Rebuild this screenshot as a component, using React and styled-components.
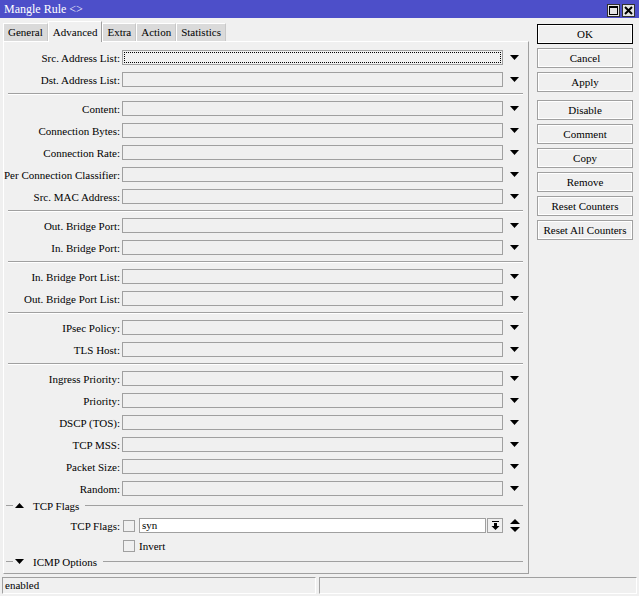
import styled, { createGlobalStyle } from "styled-components";

const GlobalStyle = createGlobalStyle`
  html, body {
    margin: 0;
    padding: 0;
    background: #f0f0f0;
  }
`;

const tabs = ["General", "Advanced", "Extra", "Action", "Statistics"];

const groups = [
  ["Src. Address List:", "Dst. Address List:"],
  [
    "Content:",
    "Connection Bytes:",
    "Connection Rate:",
    "Per Connection Classifier:",
    "Src. MAC Address:",
  ],
  ["Out. Bridge Port:", "In. Bridge Port:"],
  ["In. Bridge Port List:", "Out. Bridge Port List:"],
  ["IPsec Policy:", "TLS Host:"],
  [
    "Ingress Priority:",
    "Priority:",
    "DSCP (TOS):",
    "TCP MSS:",
    "Packet Size:",
    "Random:",
  ],
];

const buttons = [
  ["OK", "Cancel", "Apply"],
  ["Disable", "Comment", "Copy", "Remove", "Reset Counters", "Reset All Counters"],
];

function DownArrow() {
  return (
    <svg width="9" height="5" viewBox="0 0 9 5">
      <polygon points="0,0 9,0 4.5,5" fill="#000" />
    </svg>
  );
}

function Triangle({ up }) {
  return (
    <svg width="9" height="5" viewBox="0 0 9 5">
      <polygon points={up ? "0,5 9,5 4.5,0" : "0,0 9,0 4.5,5"} fill="#000" />
    </svg>
  );
}

export default function App() {
  return (
    <Window>
      <GlobalStyle />
      <TitleBar>
        <Title>Mangle Rule &lt;&gt;</Title>
        <TitleButtons>
          <TitleButton>
            <svg width="9" height="9" viewBox="0 0 9 9">
              <rect x="0.5" y="0.5" width="8" height="8" fill="none" stroke="#000" />
              <line x1="0" y1="1.5" x2="9" y2="1.5" stroke="#000" />
            </svg>
          </TitleButton>
          <TitleButton>
            <svg width="9" height="9" viewBox="0 0 9 9">
              <path d="M1 1 L8 8 M8 1 L1 8" stroke="#000" strokeWidth="2" />
            </svg>
          </TitleButton>
        </TitleButtons>
      </TitleBar>

      <Body>
        <Main>
          <TabBar>
            {tabs.map((t) => (
              <Tab key={t} $active={t === "Advanced"}>
                {t}
              </Tab>
            ))}
          </TabBar>
          <Panel>
            {groups.map((group, gi) => (
              <div key={gi}>
                {gi > 0 && <Separator />}
                {group.map((label, i) => (
                  <Row key={label}>
                    <Label>{label}</Label>
                    <Field $focus={gi === 0 && i === 0} />
                    <ArrowCell>
                      <DownArrow />
                    </ArrowCell>
                  </Row>
                ))}
              </div>
            ))}

            <SectionHeader>
              <ShortLine />
              <Triangle up />
              <SectionTitle>TCP Flags</SectionTitle>
              <LongLine />
            </SectionHeader>

            <FlagsRow>
              <Label>TCP Flags:</Label>
              <FlagsControls>
                <CheckBox />
                <WhiteField>syn</WhiteField>
                <SmallButton>
                  <svg width="9" height="9" viewBox="0 0 9 9">
                    <rect x="1" y="0" width="7" height="1" fill="#000" />
                    <rect x="3" y="2" width="3" height="3" fill="#000" />
                    <polygon points="0.5,5 8.5,5 4.5,9" fill="#000" />
                  </svg>
                </SmallButton>
              </FlagsControls>
              <ArrowCell>
                <svg width="10" height="13" viewBox="0 0 10 13">
                  <polygon points="0,5 10,5 5,0" fill="#000" />
                  <polygon points="0,8 10,8 5,13" fill="#000" />
                </svg>
              </ArrowCell>
            </FlagsRow>

            <InvertRow>
              <span />
              <InvertControl>
                <CheckBox />
                <span>Invert</span>
              </InvertControl>
            </InvertRow>

            <SectionHeader>
              <ShortLine />
              <Triangle />
              <SectionTitle>ICMP Options</SectionTitle>
              <LongLine />
            </SectionHeader>
          </Panel>
        </Main>

        <Side>
          {buttons.map((group, gi) => (
            <ButtonGroup key={gi}>
              {group.map((b) => (
                <SideButton key={b} $primary={b === "OK"}>
                  {b}
                </SideButton>
              ))}
            </ButtonGroup>
          ))}
        </Side>
      </Body>

      <StatusBar>
        <StatusCell $width="314px">enabled</StatusCell>
        <StatusCell $width="318px" />
      </StatusBar>
    </Window>
  );
}

const Window = styled.div`
  width: 639px;
  height: 596px;
  display: flex;
  flex-direction: column;
  background: #f0f0f0;
  overflow: hidden;
  font-family: "Liberation Serif", "Times New Roman", serif;
  font-size: 11px;
  color: #000;
`;

const TitleBar = styled.div`
  height: 18px;
  background: #4d4fc9;
  display: flex;
  align-items: center;
  justify-content: space-between;
  padding: 0 4px 0 4px;
  flex-shrink: 0;
`;

const Title = styled.span`
  color: #fff;
  font-size: 12px;
`;

const TitleButtons = styled.div`
  display: flex;
  gap: 2px;
  margin-top: 3px;
`;

const TitleButton = styled.div`
  width: 13px;
  height: 13px;
  border: 1px solid #303030;
  background: #e4e4e4;
  display: flex;
  align-items: center;
  justify-content: center;
  box-sizing: border-box;
`;

const Body = styled.div`
  display: flex;
  flex: 1;
  min-height: 0;
`;

const Main = styled.div`
  width: 526px;
  margin-left: 3px;
  display: flex;
  flex-direction: column;
`;

const TabBar = styled.div`
  display: flex;
  align-items: flex-end;
  height: 23px;
  position: relative;
  z-index: 1;
`;

const Tab = styled.div`
  height: ${(p) => (p.$active ? "21px" : "18px")};
  margin-bottom: ${(p) => (p.$active ? "-1px" : "0")};
  padding: 0 4px;
  box-sizing: border-box;
  display: flex;
  align-items: center;
  background: ${(p) => (p.$active ? "#f0f0f0" : "#dadada")};
  border-top: 1px solid #fff;
  border-left: 1px solid #fff;
  border-right: 1px solid ${(p) => (p.$active ? "#a0a0a0" : "#c8c8c8")};
`;

const Panel = styled.div`
  height: 534px;
  box-sizing: border-box;
  border-top: 1px solid #fff;
  border-left: 1px solid #fff;
  border-right: 1px solid #a0a0a0;
  border-bottom: 1px solid #a0a0a0;
  padding-top: 5px;
`;

const Row = styled.div`
  display: grid;
  grid-template-columns: 118px 381px 1fr;
  align-items: center;
  height: 22px;
`;

const Label = styled.div`
  text-align: right;
  padding-right: 2px;
  white-space: nowrap;
`;

const Field = styled.div`
  height: 15px;
  box-sizing: border-box;
  background: #f0f0f0;
  border: 1px solid #a0a0a0;
  position: relative;
  &::after {
    content: "";
    display: ${(p) => (p.$focus ? "block" : "none")};
    position: absolute;
    inset: 1px;
    border: 1px dotted #000;
  }
`;

const ArrowCell = styled.div`
  display: flex;
  justify-content: center;
  padding-right: 2px;
`;

const Separator = styled.div`
  height: 1px;
  background: #a0a0a0;
  margin: 2px 5px 3px 4px;
  border-bottom: 1px solid #fff;
`;

const SectionHeader = styled.div`
  display: flex;
  align-items: center;
  height: 12px;
  padding: 0 5px 0 2px;
`;

const ShortLine = styled.div`
  width: 7px;
  height: 1px;
  background: #a0a0a0;
  margin-right: 2px;
`;

const LongLine = styled.div`
  flex: 1;
  height: 1px;
  background: #a0a0a0;
  margin-left: 6px;
`;

const SectionTitle = styled.span`
  margin-left: 9px;
`;

const FlagsRow = styled(Row)`
  margin-top: 3px;
`;

const FlagsControls = styled.div`
  display: flex;
  align-items: center;
`;

const CheckBox = styled.div`
  width: 12px;
  height: 12px;
  box-sizing: border-box;
  border: 1px solid #a0a0a0;
  background: #f0f0f0;
  margin-left: 1px;
  flex-shrink: 0;
`;

const WhiteField = styled.div`
  flex: 1;
  height: 15px;
  box-sizing: border-box;
  background: #fff;
  border: 1px solid #a0a0a0;
  margin-left: 4px;
  padding-left: 2px;
  line-height: 13px;
`;

const SmallButton = styled.div`
  width: 16px;
  height: 15px;
  box-sizing: border-box;
  border: 1px solid #a0a0a0;
  background: #f0f0f0;
  margin-left: 1px;
  display: flex;
  align-items: center;
  justify-content: center;
`;

const InvertRow = styled.div`
  display: grid;
  grid-template-columns: 118px 1fr;
  align-items: center;
  height: 18px;
  margin-bottom: 1px;
`;

const InvertControl = styled.div`
  display: flex;
  align-items: center;
  gap: 4px;
`;

const Side = styled.div`
  margin-left: 8px;
  padding-top: 6px;
  width: 96px;
  display: flex;
  flex-direction: column;
  gap: 8px;
`;

const ButtonGroup = styled.div`
  display: flex;
  flex-direction: column;
  gap: 4px;
`;

const SideButton = styled.div`
  height: 20px;
  box-sizing: border-box;
  border: 1px solid ${(p) => (p.$primary ? "#000" : "#a0a0a0")};
  box-shadow: inset 0 0 0 1px #fff;
  background: #f0f0f0;
  display: flex;
  align-items: center;
  justify-content: center;
`;

const StatusBar = styled.div`
  display: flex;
  gap: 3px;
  padding: 3px 2px 2px 2px;
  flex-shrink: 0;
`;

const StatusCell = styled.div`
  width: ${(p) => p.$width};
  height: 17px;
  box-sizing: border-box;
  border-top: 1px solid #a0a0a0;
  border-left: 1px solid #a0a0a0;
  border-bottom: 1px solid #fff;
  border-right: 1px solid #fff;
  padding-left: 2px;
  line-height: 15px;
`;
